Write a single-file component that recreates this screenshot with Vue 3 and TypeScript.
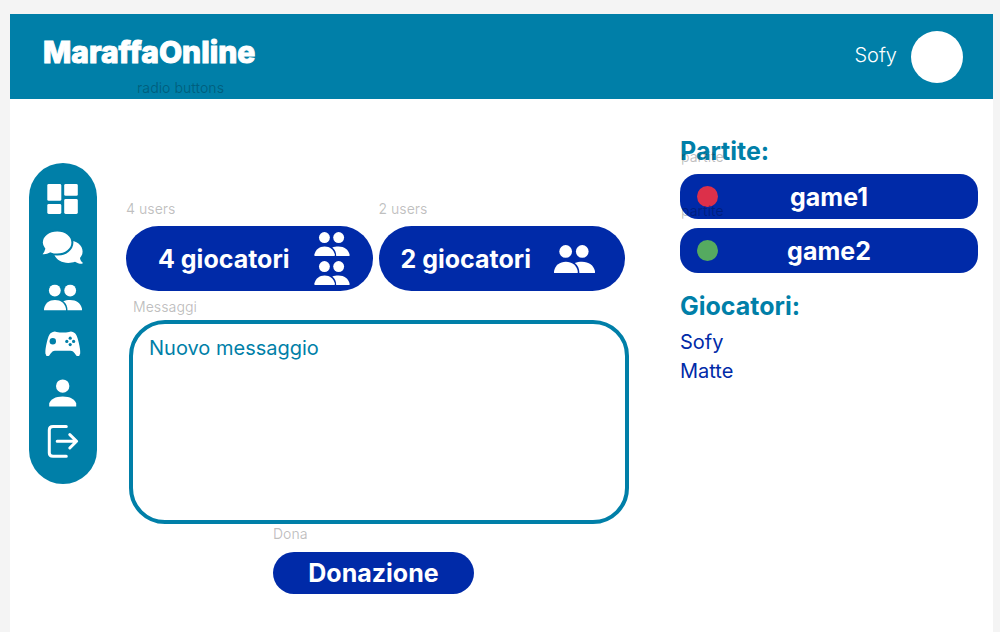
<script setup lang="ts">
import { ref } from 'vue'

interface Game {
  name: string
  status: 'busy' | 'open'
}

const games: Game[] = [
  { name: 'game1', status: 'busy' },
  { name: 'game2', status: 'open' },
]
const players: string[] = ['Sofy', 'Matte']
const message = ref<string>('')
</script>

<template>
  <div class="frame">
    <svg class="defs" aria-hidden="true">
      <symbol id="people" viewBox="0 0 38 26">
        <circle cx="10.8" cy="6" r="5.9" />
        <circle cx="26.2" cy="6" r="5.9" />
        <path d="M0 26V24.2C1.2 19 5.2 15.6 11 15.6S20.8 19 22 24.2V26Z" />
        <path d="M19.3 16.8C21.2 15.9 23.4 15.6 26 15.6C32.4 15.6 36.8 19 38 24.2V26H23.5C23.6 22.2 22.3 19 19.3 16.8Z" />
      </symbol>
    </svg>

    <header class="topbar">
      <h1 class="logo">MaraffaOnline</h1>
      <span class="hint topbar-hint">radio buttons</span>
      <div class="account">
        <span class="account-name">Sofy</span>
        <span class="avatar"></span>
      </div>
    </header>

    <div class="content">
      <nav class="rail">
        <a href="#dashboard" aria-label="Dashboard">
          <svg viewBox="0 0 48 48">
            <rect x="8.3" y="9" width="14" height="16.8" rx="1.4" />
            <rect x="8.3" y="29" width="14" height="10" rx="1.4" />
            <rect x="25.2" y="9" width="13.6" height="11.8" rx="1.4" />
            <rect x="25.2" y="24" width="13.6" height="15" rx="1.4" />
          </svg>
        </a>
        <a href="#chat" aria-label="Chat">
          <svg viewBox="0 0 48 48">
            <path d="M29.3 17.4C37.5 17.4 43.6 22 43.6 28.4C43.6 31 42.6 33.2 41 35C41.3 37 42.2 38.5 43.6 39.6C43.9 40.2 43.6 40.8 43 40.8C40.4 40.9 38 40 36 38.7C34 39.4 31.8 39.9 29.3 39.9C23 39.9 17.5 37 15.4 32Z" />
            <path class="front-bubble" d="M18.2 7.4C26.6 7.4 33.4 12.7 33.4 19.5S26.6 31.6 18.2 31.6C15.6 31.6 13.3 31.1 11.4 30.3C9.2 31.8 6.4 32.5 3.6 32.2C2.6 32 2.4 30.9 3 30.2C4.2 28.9 4.9 27.5 5.3 25.8C3.8 24 2.8 21.8 2.8 19.5C2.8 12.7 9.8 7.4 18.2 7.4Z" />
          </svg>
        </a>
        <a href="#players" aria-label="Giocatori">
          <svg viewBox="0 0 48 48"><use href="#people" x="5" y="12.5" width="38" height="26" /></svg>
        </a>
        <a href="#games" aria-label="Partite">
          <svg viewBox="0 0 48 48">
            <path d="M11.5 13.2Q15 10.8 17.5 11.9Q24 13.2 30 11.9Q33 10.8 36 13.2Q38 15 39.6 22Q41.5 30 41.2 33.4Q40.4 37.2 37.4 35.7Q36 33.4 34 31.6Q33 30.8 31.5 30.8H16Q14.5 30.8 13.5 31.6Q11.5 33.4 10.1 35.7Q7.2 37.2 6.4 33.4Q6 30 7.9 22Q9.5 15 11.5 13.2Z" />
            <g class="cutout">
              <circle cx="13.8" cy="21.3" r="3.2" />
              <circle cx="31.2" cy="18.2" r="1.6" />
              <circle cx="31.2" cy="24.6" r="1.6" />
              <circle cx="27.8" cy="21.4" r="1.6" />
              <circle cx="34.6" cy="21.4" r="1.6" />
            </g>
          </svg>
        </a>
        <a href="#profile" aria-label="Profilo">
          <svg viewBox="0 0 48 48">
            <circle cx="23.7" cy="17.1" r="6.7" />
            <path d="M10.2 37.5V34.5C11.4 30.2 16.4 27.4 23.7 27.4S36 30.2 37.2 34.5V37.5Z" />
          </svg>
        </a>
        <a href="#logout" aria-label="Esci">
          <svg viewBox="0 0 48 48" class="outline">
            <path d="M27.3 9.5H14Q10.3 9.5 10.3 13V36Q10.3 39.2 14 39.2H27.3" />
            <path d="M18.2 24.3H37.4M30.8 17.6L37.6 24.3L30.8 31" />
          </svg>
        </a>
      </nav>

      <main class="lobby">
        <div class="modes">
          <div class="mode">
            <span id="four-hint" class="hint">4 users</span>
            <button class="pill mode-button four" type="button" aria-describedby="four-hint">
              4 giocatori
              <span class="stack">
                <svg class="people small"><use href="#people" /></svg>
                <svg class="people small"><use href="#people" /></svg>
              </span>
            </button>
          </div>
          <div class="mode">
            <span id="two-hint" class="hint">2 users</span>
            <button class="pill mode-button two" type="button" aria-describedby="two-hint">
              2 giocatori
              <svg class="people"><use href="#people" /></svg>
            </button>
          </div>
        </div>

        <div class="messages">
          <label class="hint" for="message">Messaggi</label>
          <textarea id="message" v-model="message" placeholder="Nuovo messaggio"></textarea>
        </div>

        <div class="donation">
          <span id="dona-hint" class="hint">Dona</span>
          <button class="pill donate" type="button" aria-describedby="dona-hint">Donazione</button>
        </div>
      </main>

      <aside class="side">
        <section>
          <h2>Partite:</h2>
          <ul class="games">
            <li v-for="game in games" :key="game.name">
              <span class="hint game-hint">partite</span>
              <button class="pill game" type="button">
                <span class="dot" :class="game.status"></span>
                <span>{{ game.name }}</span>
              </button>
            </li>
          </ul>
        </section>
        <section class="players">
          <h2>Giocatori:</h2>
          <ul>
            <li v-for="player in players" :key="player">{{ player }}</li>
          </ul>
        </section>
      </aside>
    </div>
  </div>
</template>

<style>
body {
  background: #f4f4f4;
}
</style>

<style scoped>
.frame {
  --teal: #007fa8;
  --blue: #002aa8;
  box-sizing: border-box;
  margin: 14px 7px 0 10px;
  min-height: calc(100vh - 14px);
  background: #fff;
  font-family: Inter, "Liberation Sans", sans-serif;
}
.defs {
  position: absolute;
  width: 0;
  height: 0;
}
h1,
h2,
ul {
  margin: 0;
  padding: 0;
  list-style: none;
}
.hint {
  display: block;
  font-size: 14px;
  line-height: 16px;
  color: rgba(0, 0, 0, 0.25);
}
.topbar {
  position: relative;
  display: flex;
  justify-content: space-between;
  box-sizing: border-box;
  height: 85px;
  padding: 17px 30px 0 33px;
  background: var(--teal);
  color: #fff;
}
.logo {
  font-size: 30px;
  font-weight: 800;
  line-height: 42px;
  -webkit-text-stroke: 1px #fff;
}
.topbar-hint {
  position: absolute;
  left: 127px;
  bottom: 3px;
}
.account {
  display: flex;
  gap: 14px;
}
.account-name {
  font-size: 20px;
  font-weight: 300;
  line-height: 48px;
}
.avatar {
  width: 52px;
  height: 52px;
  border-radius: 50%;
  background: #fff;
}
.content {
  display: grid;
  grid-template-columns: 68px minmax(0, 1fr) 298px;
  align-items: start;
  padding: 36px 15px 36px 19px;
}
.rail {
  display: flex;
  flex-direction: column;
  align-items: center;
  justify-content: space-between;
  box-sizing: border-box;
  min-height: 321px;
  margin-top: 28px;
  padding: 12px 0 19px;
  border-radius: 34px;
  background: var(--teal);
}
.rail a,
.rail svg {
  display: block;
  width: 48px;
  height: 48px;
  fill: #fff;
}
.rail .front-bubble {
  stroke: var(--teal);
  stroke-width: 2;
}
.rail .cutout {
  fill: var(--teal);
}
.rail .outline {
  fill: none;
  stroke: #fff;
  stroke-width: 3;
  stroke-linecap: round;
  stroke-linejoin: round;
}
.lobby {
  margin: 66px 51px 0 29px;
}
.modes {
  display: grid;
  grid-template-columns: 1fr 1fr;
  gap: 6px;
  margin-right: 4px;
}
.pill {
  border: 0;
  background: var(--blue);
  color: #fff;
  font: 700 25px/30px Inter, "Liberation Sans", sans-serif;
  cursor: pointer;
}
.mode-button {
  display: flex;
  align-items: center;
  justify-content: space-between;
  width: 100%;
  height: 65px;
  margin-top: 9px;
  border-radius: 33px;
  white-space: nowrap;
}
.four {
  padding: 0 23px 0 32px;
}
.two {
  padding: 0 30px 0 22px;
}
.stack {
  display: grid;
  gap: 5px;
}
.people {
  display: block;
  width: 41px;
  height: 28px;
  fill: #fff;
}
.people.small {
  width: 36px;
  height: 24px;
}
.messages {
  margin: 8px 0 0 3px;
}
.messages .hint {
  margin: 0 0 5px 4px;
}
textarea {
  display: block;
  box-sizing: border-box;
  width: 100%;
  height: 204px;
  padding: 12px 16px;
  border: 4px solid var(--teal);
  border-radius: 36px;
  outline: 0;
  background: #fff;
  color: var(--teal);
  font: 400 20px/24px Inter, "Liberation Sans", sans-serif;
  resize: none;
}
textarea::placeholder {
  color: var(--teal);
  opacity: 1;
}
.donation {
  width: 201px;
  margin: 2px auto 0;
  padding-right: 8px;
}
.donate {
  width: 100%;
  height: 42px;
  margin-top: 10px;
  border-radius: 21px;
}
h2 {
  color: var(--teal);
  font-size: 25px;
  font-weight: 700;
  line-height: 32px;
}
.games {
  display: grid;
  gap: 9px;
  margin-top: 7px;
}
.games li {
  position: relative;
}
.game-hint {
  position: absolute;
  left: 1px;
  top: -25px;
}
.game {
  display: grid;
  grid-template-columns: 1fr auto 1fr;
  align-items: center;
  width: 100%;
  height: 45px;
  padding: 0 17px;
  border-radius: 18px;
}
.dot {
  width: 21px;
  height: 21px;
  border-radius: 50%;
}
.busy {
  background: #dc304a;
}
.open {
  background: #55aa60;
}
.players {
  margin-top: 17px;
}
.players ul {
  margin-top: 6px;
  color: var(--blue);
  font-size: 20px;
  line-height: 29px;
}
</style>
